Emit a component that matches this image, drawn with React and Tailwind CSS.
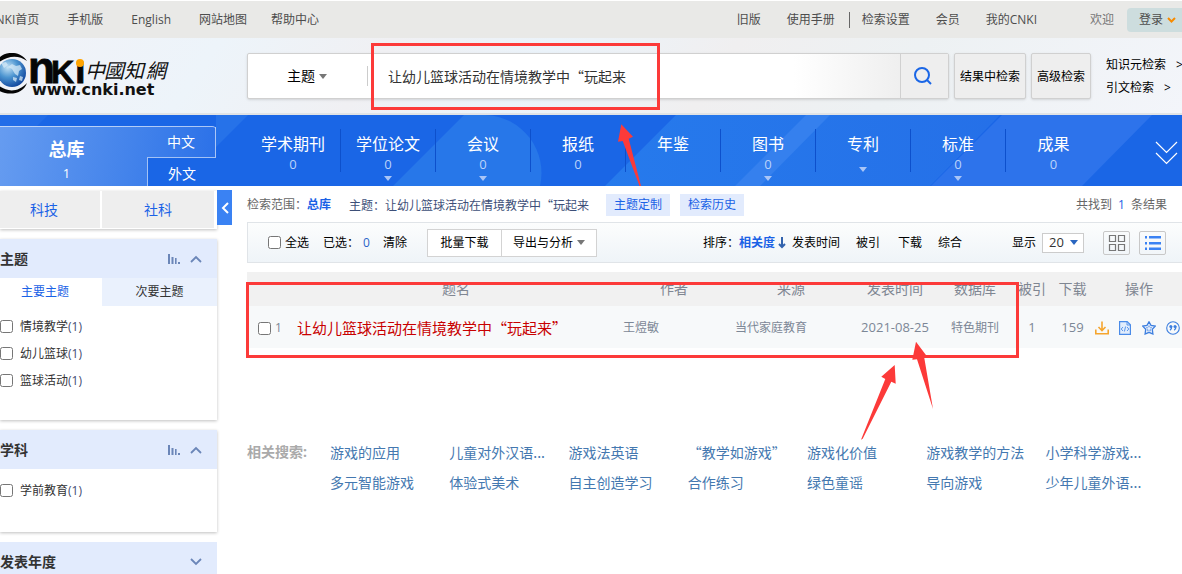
import React from "react";

const CJK = "font-['Noto_Sans_CJK_SC',sans-serif]";

const categories = [
  { name: "学术期刊", count: "0", more: false },
  { name: "学位论文", count: "0", more: true },
  { name: "会议", count: "0", more: true },
  { name: "报纸", count: "0", more: false },
  { name: "年鉴", count: "", more: false },
  { name: "图书", count: "0", more: true },
  { name: "专利", count: "", more: true },
  { name: "标准", count: "0", more: true },
  { name: "成果", count: "0", more: false },
];

const related = [
  "游戏的应用", "儿童对外汉语...", "游戏法英语", "“教学如游戏”", "游戏化价值", "游戏教学的方法", "小学科学游戏...",
  "多元智能游戏", "体验式美术", "自主创造学习", "合作练习", "绿色童谣", "导向游戏", "少年儿童外语...",
];

function Caret({ className }) {
  return (
    <svg className={className} width="8" height="5" viewBox="0 0 8 5" fill="currentColor" aria-hidden="true">
      <path d="M0 0h8L4 5z" />
    </svg>
  );
}

function Chevron({ up }) {
  return (
    <svg width="12" height="8" viewBox="0 0 12 8" fill="none" stroke="#6b86b8" strokeWidth="1.8" aria-hidden="true">
      <path d={up ? "M1 7l5-5 5 5" : "M1 1l5 5 5-5"} />
    </svg>
  );
}

function Bars() {
  return (
    <svg width="12" height="10" viewBox="0 0 12 10" fill="#6b86b8" aria-hidden="true">
      <path d="M0 0h2v10H0zM3.500 3h2v7h-2zM7 4h1.600v6H7zM10 8h2v2h-2z" />
    </svg>
  );
}

function Logo() {
  return (
    <svg width="172" height="48" viewBox="0 0 172 48" role="img" aria-label="CNKI 中国知网">
      <defs>
        <radialGradient id="globe" cx="0.35" cy="0.3" r="0.8">
          <stop offset="0" stopColor="#c4e2f5" />
          <stop offset="0.45" stopColor="#4b94d0" />
          <stop offset="1" stopColor="#0a3c96" />
        </radialGradient>
      </defs>
      <circle cx="12" cy="20" r="14" fill="url(#globe)" />
      <path d="M8 14l4-3 4 2 4-1 2 4-3 2-1 5-3-2-3-5zM13 24l4 1-1 4-3-2zM1 10l5-1 2 3-4 3zM20 23l3 1-1 4-3-1z" fill="#d5e9f7" opacity="0.75" />
      <path d="M-2 6C4-2 20-3 27 8C19 2 8 2-2 10z" fill="#050505" />
      <path d="M-2 32C6 39 18 40 27 30C23 42 7 43-2 37z" fill="#050505" />
      <g fontFamily="Liberation Sans, sans-serif" fontWeight="700" fill="#050505" stroke="#050505" strokeWidth="0.8">
        <text x="28" y="30" fontSize="44">n</text>
        <text x="51" y="30" fontSize="32">K</text>
        <text x="75" y="30" fontSize="38">ı</text>
      </g>
      <circle cx="80" cy="10" r="4" fill="#ffa400" />
      <g fontFamily="Noto Sans CJK TC, sans-serif" fontSize="20" fontStyle="italic" fill="#111">
        <text x="85" y="25">中</text>
        <text x="104" y="25">國</text>
        <text x="124" y="25">知</text>
        <text x="146" y="25">網</text>
      </g>
      <text x="32" y="42" fontFamily="DejaVu Sans, sans-serif" fontWeight="700" fontSize="16" fill="#111">www.cnki.net</text>
    </svg>
  );
}

function TopBar() {
  return (
    <div className="mt-px flex h-[37px] items-center bg-[#e9e9e7] text-[#4d4d4d]">
      <nav className="-ml-3 flex items-center gap-7">
        <a href="#home">CNKI首页</a>
        <a href="#mobile">手机版</a>
        <a href="#en">English</a>
        <span className="flex gap-6">
          <a href="#map">网站地图</a>
          <a href="#help">帮助中心</a>
        </span>
      </nav>
      <nav className="ml-auto flex items-center">
        <a href="#old" className="mr-6.5">旧版</a>
        <a href="#manual" className="mr-3.5">使用手册</a>
        <span className="mr-3 h-4 w-px bg-[#666]" />
        <a href="#settings" className="mr-6.5">检索设置</a>
        <a href="#vip" className="mr-6.5">会员</a>
        <a href="#my" className="mr-[53px]">我的CNKI</a>
        <span className="mr-[13px] text-[#777]">欢迎</span>
        <button className="flex h-6 w-[55px] items-center gap-1 rounded-l-sm bg-[#cdddde] pl-3">
          登录
          <svg width="9" height="6" viewBox="0 0 9 6" fill="none" stroke="#f78b00" strokeWidth="2" aria-hidden="true"><path d="M1 1l3.500 3.500L8 1" /></svg>
        </button>
      </nav>
    </div>
  );
}

function Header() {
  const side = "h-[46px] shrink-0 whitespace-nowrap rounded-xs border border-[#d0d0d0] bg-[#eee] pt-px text-black shadow-sm";
  return (
    <header className="flex h-[77px] items-start border-b-2 border-[#e1e3e5] bg-[linear-gradient(125deg,#f1f2f7_0%,#edf4fa_18%,#f0f0f3_32%,#ebf3fa_45%,#f0eff0_60%,#edf1f3_75%,#f3f5fa_100%)] pt-[15px]">
      <div className="w-[247px] shrink-0"><Logo /></div>
      <form className="flex h-[46px] flex-1 rounded-xs border border-[#d0d0d0] bg-white shadow-sm">
        <div className="relative flex w-[119px] items-center">
          <select aria-label="检索字段" className="h-full w-full appearance-none bg-transparent pl-[39px] text-sm text-black outline-none">
            <option>主题</option>
          </select>
          <Caret className="pointer-events-none absolute left-[71px] text-[#777]" />
        </div>
        <span className="h-5 w-px self-center bg-[#ccc]" />
        <input aria-label="检索词" defaultValue="让幼儿篮球活动在情境教学中“玩起来" className={`${CJK} min-w-0 flex-1 bg-[linear-gradient(90deg,#fff_80%,#efefef)] pl-5 text-sm text-[#333] outline-none`} />
        <button aria-label="检索" className="flex w-12 items-center justify-center border-l border-[#d0d0d0] bg-[#eee] pr-1">
          <svg width="20" height="20" viewBox="0 0 20 20" fill="none" stroke="#1a66e6" strokeWidth="2" aria-hidden="true">
            <circle cx="9" cy="9" r="7" /><path d="M14 14l4 4" />
          </svg>
        </button>
      </form>
      <button className={`${side} ml-[5px] w-[72px]`}>结果中检索</button>
      <button className={`${side} ml-[5px] w-[60px]`}>高级检索</button>
      <div className="ml-[15px] flex w-[76px] shrink-0 flex-col gap-[7px] whitespace-nowrap pt-1 leading-4 text-black">
        <a href="#unit">知识元检索<span className="ml-2.5">&gt;</span></a>
        <a href="#cite">引文检索<span className="ml-2.5">&gt;</span></a>
      </div>
    </header>
  );
}

function Banner() {
  return (
    <div className="relative h-[71px] bg-[#1a66e6] text-white">
      <svg className="absolute inset-0 h-full w-full" viewBox="0 0 1182 71" preserveAspectRatio="none" aria-hidden="true">
        <defs>
          <linearGradient id="band" x1="0" x2="1"><stop offset="0" stopColor="#267aec" /><stop offset="1" stopColor="#2570e8" /></linearGradient>
        </defs>
        <path d="M0 0h48L0 48z" fill="#226de8" />
        <path d="M216 0h32l-32 32z" fill="#2672e9" />
        <path d="M393 71L464 0h22a58 58 0 0 1 54 71z" fill="#2777e9" />
        <path d="M605 71L676 0h324l-70 71z" fill="url(#band)" />
        <path d="M735 71L806 0h24l-70 71z" fill="#3580ee" />
        <path d="M931 71L1002 0h150l-70 71z" fill="#2d73eb" />
      </svg>
      <div className="relative flex h-full">
        <div className="mt-[11px] flex w-54 shrink-0 rounded-tr-sm border-t border-white/60 bg-[linear-gradient(100deg,#669cf0,#4383eb_60%,#2a70e8)]">
          <a href="#all" className="flex w-[147px] flex-col items-center pr-3.5 pt-2.5">
            <b className="text-lg leading-6">总库</b>
            <span className="pt-1 text-[13px] leading-4">1</span>
          </a>
          <div className="flex flex-1 flex-col text-sm">
            <a href="#zh" className="flex h-[30px] items-center justify-center border-r border-white/60">中文</a>
            <a href="#foreign" className="flex flex-1 items-center justify-center border-l border-t border-white/60 bg-[#1a66e6] pt-1">外文</a>
          </div>
        </div>
        <ul className="ml-[30px] flex divide-x divide-[#0d50cc] py-3.5">
          {categories.map((c) => (
            <li key={c.name} className="flex w-[95px] flex-col items-center pt-[3px]">
              <a href="#cat" className="text-base leading-6">{c.name}</a>
              <span className="h-[17px] text-[13px] leading-[17px] text-[#bcd3fa]">{c.count}</span>
              {c.more && <Caret className="mt-[3px] shrink-0 text-[#a9c5f7]" />}
            </li>
          ))}
        </ul>
        <button aria-label="展开" className="ml-auto mr-1 pt-1">
          <svg width="23" height="26" viewBox="0 0 23 26" fill="none" stroke="#fff" strokeWidth="1.2" aria-hidden="true">
            <path d="M1 2l10.500 10.500L22 2M1 13l10.500 10.500L22 13" />
          </svg>
        </button>
      </div>
    </div>
  );
}

function FilterItem({ label }) {
  return (
    <label className="flex h-[27px] items-center gap-[7px] text-[#333]">
      <input type="checkbox" className="size-[13px]" />
      <span>{label}<span className="text-[#444c70]">(1)</span></span>
    </label>
  );
}

function CardHead({ title, open }) {
  return (
    <h2 className="flex h-[39px] items-center bg-[#e2ebfd] pr-[15px] pt-px text-sm font-bold text-[#333]">
      {title}
      <span className="ml-auto flex items-center gap-2.5">{open && <Bars />}<Chevron up={open} /></span>
    </h2>
  );
}

function Sidebar() {
  const card = "bg-white shadow-[0_1px_3px_rgba(0,0,0,0.25)]";
  return (
    <aside className="flex w-[217px] shrink-0 flex-col pt-[5px]">
      <div className="flex h-[38px] gap-0.5 bg-white pb-px pr-[3px] text-sm text-[#1a62e6] shadow-[0_1px_3px_rgba(0,0,0,0.25)]">
        <button className="w-[100px] bg-[#eee] pr-3">科技</button>
        <button className="flex-1 bg-[#eee]">社科</button>
      </div>
      <section className={`${card} mt-2.5 h-[181px]`}>
        <CardHead title="主题" open />
        <div className="flex h-7">
          <button className="w-[102px] pr-3 text-[#1a62e6]">主要主题</button>
          <button className="flex-1 bg-[#eaf1fd] text-[#333]">次要主题</button>
        </div>
        <div className="pt-[7px]">
          <FilterItem label="情境教学" />
          <FilterItem label="幼儿篮球" />
          <FilterItem label="篮球活动" />
        </div>
      </section>
      <section className={`${card} mt-2.5 h-[102px]`}>
        <CardHead title="学科" open />
        <div className="pt-2"><FilterItem label="学前教育" /></div>
      </section>
      <section className="mt-2.5 h-8 overflow-hidden">
        <CardHead title="发表年度" />
      </section>
    </aside>
  );
}

function Toolbar() {
  return (
    <div className="flex h-[41px] items-center border border-r-0 border-[#e0e4e8] bg-[linear-gradient(#fcfdfd,#eff4f8)] text-black">
      <label className="ml-5 flex items-center gap-1"><input type="checkbox" className="size-[13px]" />全选</label>
      <span className="ml-3.5">已选：</span>
      <span className="ml-1 text-[#2a62c8]">0</span>
      <button className="ml-[13px]">清除</button>
      <button className="ml-5 h-7 w-[75px] border border-[#d3d3d3] bg-white">批量下载</button>
      <button className="-ml-px flex h-7 w-24 items-center justify-center gap-1 border border-[#d3d3d3] bg-white">导出与分析<Caret className="text-[#777]" /></button>
      <div className="ml-auto flex items-center">
        <span>排序：</span>
        <button className="flex items-center gap-[3px] font-bold text-[#1a62e6]">
          相关度
          <svg width="8" height="12" viewBox="0 0 8 12" fill="none" stroke="#3263ad" strokeWidth="2" aria-hidden="true"><path d="M4 0v10M1 7l3 3 3-3" /></svg>
        </button>
        <button className="ml-1.5">发表时间</button>
        <button className="ml-4">被引</button>
        <button className="ml-4.5">下载</button>
        <button className="ml-4">综合</button>
        <label htmlFor="size" className="ml-[50px]">显示</label>
        <div className="relative ml-1.5 flex items-center">
          <select id="size" className="h-5 w-[42px] appearance-none border border-[#ccc] bg-white pl-1.5 text-[13px] text-[#333] outline-none"><option>20</option></select>
          <Caret className="pointer-events-none absolute right-1.5 text-[#2a66c0]" />
        </div>
        <button aria-label="网格" className="ml-[19px] flex h-6 w-[27px] items-center justify-center rounded-xs border border-[#c8c8c8]">
          <svg width="18" height="18" viewBox="0 0 18 18" fill="none" stroke="#777" strokeWidth="1.2" aria-hidden="true">
            <path d="M1.500 1.500h6v6h-6zM10.500 1.500h6v6h-6zM1.500 10.500h6v6h-6zM10.500 10.500h6v6h-6z" />
          </svg>
        </button>
        <button aria-label="列表" className="ml-[9px] mr-4 flex h-6 w-[27px] items-center justify-center rounded-xs border border-[#c8c8c8]">
          <svg width="16" height="14" viewBox="0 0 16 14" fill="#3a82f3" aria-hidden="true">
            <path d="M4 0h12v2.500H4zM4 6h12v2.500H4zM4 11.500h12V14H4zM0 0h2v2.500H0zM0 6h2v2.500H0zM0 11.500h2V14H0z" />
          </svg>
        </button>
      </div>
    </div>
  );
}

function RowIcons() {
  return (
    <div className="flex w-[85px] items-center justify-between">
      <a href="#download" aria-label="下载">
        <svg width="14" height="14" viewBox="0 0 14 14" fill="none" stroke="#f5a52e" strokeWidth="1.6" aria-hidden="true"><path d="M7 0.500v9M3.500 6L7 9.500 10.500 6M0.800 8.500v4.200h12.400V8.500" /></svg>
      </a>
      <a href="#html" aria-label="HTML阅读">
        <svg width="12" height="14" viewBox="0 0 12 14" fill="none" stroke="#4a8be8" aria-hidden="true"><path d="M0.600 0.600h7.600l3.200 3.200v9.600H0.600z" fill="#e2edfc" strokeWidth="1.2" /><path d="M8 1v3h3M4 6L2.200 8 4 10M8 6l1.800 2L8 10M6.600 5.500l-1.200 5" strokeWidth="0.9" /></svg>
      </a>
      <a href="#fav" aria-label="收藏">
        <svg width="14" height="14" viewBox="0 0 14 14" fill="#e9f1fd" stroke="#3d7fdf" strokeWidth="1.3" aria-hidden="true"><path d="M7 0.800l2 3.500 4.300.8-3 3.200.6 4.700L7 11.300 3.100 13l.6-4.700-3-3.200L5 4.300z" /><path d="M7 4.500l.8 1.800 2 .3-1.500 1.400.4 2L7 9l-1.700 1 .4-2-1.500-1.400 2-.3z" strokeWidth="0.500" /></svg>
      </a>
      <a href="#quote" aria-label="引用">
        <svg width="14" height="14" viewBox="0 0 14 14" fill="none" stroke="#3d7fdf" aria-hidden="true"><circle cx="7" cy="7" r="6.300" strokeWidth="1.100" /><path d="M5.800 5.300c0 2-.6 3.200-1.800 4M10 5.300c0 2-.6 3.200-1.800 4" strokeWidth="1.200" /><g fill="#3d7fdf" stroke="none"><circle cx="4.800" cy="5.600" r="1.500" /><circle cx="9" cy="5.600" r="1.500" /></g></svg>
      </a>
    </div>
  );
}

function Results() {
  return (
    <table className="mt-[9px] w-full table-fixed text-[#7c8796]">
      <colgroup>
        <col className="w-[50px]" /><col /><col className="w-[118px]" /><col className="w-[116px]" /><col className="w-[92px]" />
        <col className="w-[68px]" /><col className="w-[46px]" /><col className="w-[35px]" /><col className="w-[92px]" />
      </colgroup>
      <thead className="bg-[#f1f1f1] text-sm text-[#7f8692]">
        <tr className="h-[34px] *:whitespace-nowrap *:p-0 *:font-normal">
          <th aria-label="选择" /><th>题名</th><th>作者</th><th>来源</th><th>发表时间</th><th>数据库</th><th>被引</th><th>下载</th><th><span className="pl-1.5">操作</span></th>
        </tr>
      </thead>
      <tbody className="bg-[#f7f9fa]">
        <tr className="h-[42px] *:px-0 *:pb-0 *:pt-0.5">
          <td><label className="flex items-center gap-1 pl-[11px]"><input type="checkbox" className="size-[13px]" />1</label></td>
          <td><a href="#paper" className={`${CJK} text-[15px] text-[#c80000]`}>让幼儿篮球活动在情境教学中“玩起来”</a></td>
          <td><span className="pl-2">王煜敏</span></td>
          <td><span className="pl-0.5">当代家庭教育</span></td>
          <td className="text-center text-[13px]">2021-08-25</td>
          <td className="text-center">特色期刊</td>
          <td className="text-center text-[13px]">1</td>
          <td className="text-center text-[13px]">159</td>
          <td><div className="pl-[5px]"><RowIcons /></div></td>
        </tr>
      </tbody>
    </table>
  );
}

function Annotations() {
  return (
    <svg className="pointer-events-none absolute left-0 top-0" width="1182" height="574" viewBox="0 0 1182 574" aria-hidden="true">
      <g fill="none" stroke="#fc3a39" strokeWidth="3">
        <path d="M372.500 44.500h286v64h-286z" />
        <path d="M247.500 283.500h770v73h-770z" />
      </g>
      <g fill="#fc3a39">
        <path d="M621.300 124.300L633 136.700L628.700 138.700L641 186H639.500L622.700 141L618 141.700z" />
        <path d="M894.700 365L881.300 376.700L885.300 379L861 439.700L862.700 438.700L891.300 381.700L895.700 383.700z" />
        <path d="M916 341.700L926.700 356L924.300 358L933 409L917 359.300L912.300 359.700z" />
      </g>
    </svg>
  );
}

export default function App() {
  return (
    <div lang="zh-CN" className="relative overflow-hidden bg-white font-['Open_Sans','Noto_Sans_CJK_SC',sans-serif] text-xs text-[#333]">
      <TopBar />
      <Header />
      <Banner />
      <div className="flex items-start">
        <Sidebar />
        <button aria-label="收起侧栏" className="mt-1 flex h-[35px] w-[15px] shrink-0 items-center justify-center bg-[#3a82f3]">
          <svg width="8" height="12" viewBox="0 0 8 12" fill="none" stroke="#fff" strokeWidth="2" aria-hidden="true"><path d="M7 1L2 6l5 5" /></svg>
        </button>
        <main className="ml-[15px] min-w-0 flex-1">
          <div className="flex h-9 items-center pt-0.5 text-[#3d4f78]">
            <span className="text-[#666]">检索范围：</span>
            <b className="text-[#1a62e6]">总库</b>
            <span className={`${CJK} ml-[18px]`}>主题：让幼儿篮球活动在情境教学中“玩起来</span>
            <button className="ml-[17px] h-[22px] w-16 bg-[#e2ebfd] text-[#1a62e6]">主题定制</button>
            <button className="ml-2.5 h-[22px] w-16 bg-[#e2ebfd] text-[#1a62e6]">检索历史</button>
            <span className="ml-auto mr-[15px] text-[#666]">共找到<span className="mx-1.5 text-[#1a62e6]">1</span>条结果</span>
          </div>
          <Toolbar />
          <Results />
          <section className="mt-[89px] flex text-sm leading-[30px]">
            <h3 className="w-[83px] shrink-0 font-bold text-[#aaa]">相关搜索:</h3>
            <ul className={`${CJK} grid flex-1 grid-cols-[repeat(6,14%)_1fr] whitespace-nowrap text-[#4478b0]`}>
              {related.map((r) => (
                <li key={r}><a href="#related">{r}</a></li>
              ))}
            </ul>
          </section>
        </main>
      </div>
      <Annotations />
    </div>
  );
}
